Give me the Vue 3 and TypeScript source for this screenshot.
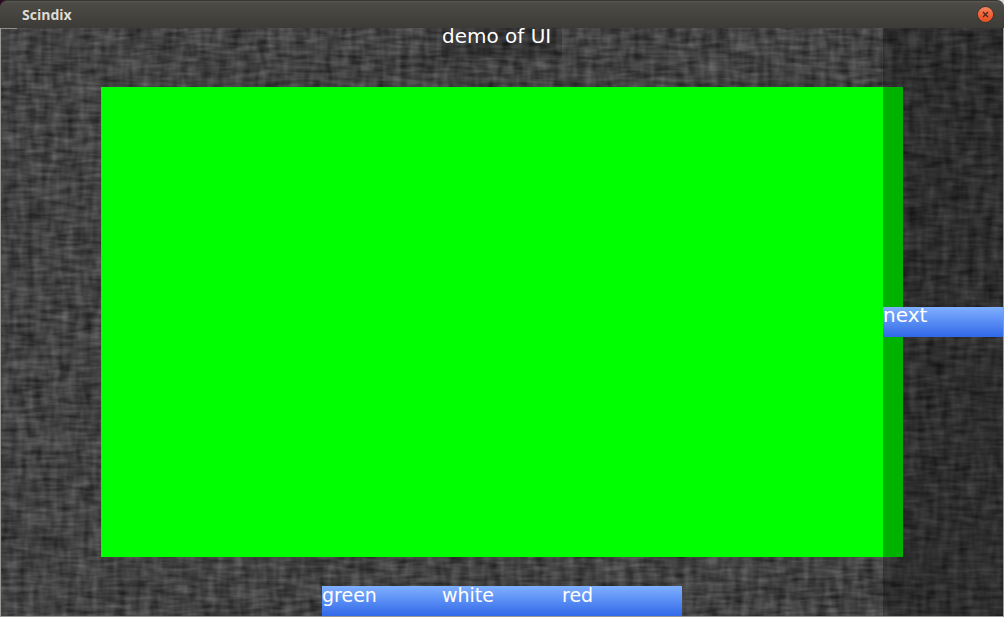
<script setup lang="ts">
import { ref } from 'vue'

type Swatch = 'green' | 'white' | 'red'

const swatches: Swatch[] = ['green', 'white', 'red']
const selected = ref<Swatch>('green')

function next(): void {
  const index = swatches.indexOf(selected.value)
  selected.value = swatches[(index + 1) % swatches.length]
}
</script>

<template>
  <div class="window">
    <header class="titlebar">
      <span class="window-title">Scindix</span>
      <button class="close" type="button" aria-label="Close">
        <svg viewBox="0 0 17 17" width="17" height="17" aria-hidden="true">
          <defs>
            <linearGradient id="close-fill" x1="0" y1="0" x2="0" y2="1">
              <stop offset="0" stop-color="#f88560" />
              <stop offset="0.5" stop-color="#f0643a" />
              <stop offset="1" stop-color="#e2511f" />
            </linearGradient>
          </defs>
          <circle cx="8.5" cy="8.5" r="8.3" fill="#35332e" />
          <circle cx="8.5" cy="8.5" r="7.6" fill="url(#close-fill)" />
          <path d="M6 6l5 5M11 6l-5 5" stroke="#4a2415" stroke-width="1.2" fill="none" />
        </svg>
      </button>
    </header>

    <main class="stage">
      <svg class="texture" aria-hidden="true">
        <filter id="weave" x="0" y="0" width="100%" height="100%" color-interpolation-filters="sRGB">
          <feTurbulence type="fractalNoise" baseFrequency="0.04 0.22" numOctaves="2" seed="7" result="across" />
          <feColorMatrix
            in="across"
            values="0.24 0 0 0 0.01  0.24 0 0 0 0.01  0.24 0 0 0 0.01  0 0 0 0 1"
            result="acrossGray"
          />
          <feTurbulence type="fractalNoise" baseFrequency="0.12 0.04" numOctaves="2" seed="19" result="down" />
          <feColorMatrix
            in="down"
            values="0.24 0 0 0 0.01  0.24 0 0 0 0.01  0.24 0 0 0 0.01  0 0 0 0 1"
            result="downGray"
          />
          <feComposite in="acrossGray" in2="downGray" operator="arithmetic" k1="0" k2="1" k3="1" k4="0" />
        </filter>
        <rect width="100%" height="100%" filter="url(#weave)" />
        <rect width="16" height="1" fill="#8d8d88" />
      </svg>
      <div class="canvas" :class="selected"></div>
      <h1 class="caption">demo of UI</h1>
      <aside class="sidebar">
        <button class="action" type="button" @click="next">next</button>
      </aside>
      <nav class="choices" aria-label="Colour">
        <button
          v-for="name in swatches"
          :key="name"
          class="action choice"
          type="button"
          @click="selected = name"
        >
          {{ name }}
        </button>
      </nav>
    </main>
  </div>
</template>

<style>
body {
  background: linear-gradient(90deg, #2c0a22 50%, #d8d8d8 50%);
}
</style>

<style scoped>
.window {
  display: flex;
  flex-direction: column;
  box-sizing: border-box;
  min-height: 100vh;
  font-family: "DejaVu Sans", sans-serif;
}

.titlebar {
  display: flex;
  align-items: center;
  justify-content: space-between;
  box-sizing: border-box;
  height: 28px;
  padding: 0 10px 0 22px;
  border-top: 1px solid #383733;
  border-radius: 7px 7px 0 0;
  background: linear-gradient(#5a5953, #4c4b45 2px, #3c3b37);
}

.window-title {
  color: #dfdbd2;
  font: bold 14px/26px "Open Sans", sans-serif;
}

.close {
  display: flex;
  padding: 0;
  border: 0;
  background: none;
}

.stage {
  display: grid;
  flex: 1;
  border: solid #9c9994;
  border-width: 0 1px 1px;
  background: #424242;
}

.stage > * {
  grid-area: 1 / 1;
}

.texture {
  width: 100%;
  height: 100%;
}

.canvas {
  width: 80%;
  height: 80%;
  place-self: center;
}

.canvas.green {
  background: #00ff00;
}

.canvas.white {
  background: #ffffff;
}

.canvas.red {
  background: #ff0000;
}

.caption {
  place-self: start center;
  width: 120px;
  height: 30px;
  margin: 0;
  background: rgba(0, 0, 0, 0.2);
  color: #ffffff;
  font-size: 20px;
  font-weight: normal;
  line-height: 16px;
}

.sidebar {
  display: flex;
  align-items: center;
  justify-self: end;
  width: 120px;
  background: rgba(0, 0, 0, 0.3);
}

.action {
  display: flex;
  align-items: flex-start;
  width: 120px;
  height: 30px;
  padding: 0;
  border: 0;
  background: linear-gradient(#80b0ff, #3068e8);
  color: #ffffff;
  font-family: inherit;
  font-size: 20px;
  line-height: 16px;
}

.choices {
  display: flex;
  place-self: end center;
}

.choice {
  font-size: 19px;
  line-height: 18px;
}
</style>
